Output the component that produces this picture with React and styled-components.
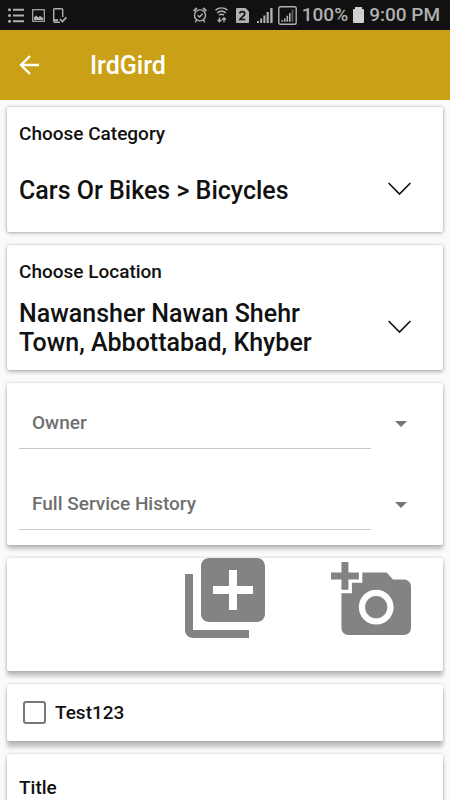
import React from 'react'
import styled, { createGlobalStyle, css } from 'styled-components'

const GlobalStyle = createGlobalStyle`
    * {
        box-sizing: border-box;
    }
    html {
        scrollbar-width: none;
    }
    body {
        margin: 0;
        background: #fafafa;
        color: #111;
        font-family: Roboto, "Liberation Sans", sans-serif;
        font-weight: 500;
    }
`

const StatusBarStyle = styled.div`
    display: flex;
    justify-content: space-between;
    align-items: center;
    height: 30px;
    padding: 0 10px 0 8px;
    background: #111;
    color: #b0b0b0;
    font-size: 19px;
    line-height: 30px;
    white-space: nowrap;
`
const StatusGroupStyle = styled.div`
    display: flex;
    align-items: center;
    gap: ${props => props.$gap}px;
`
const ToolbarStyle = styled.header`
    display: flex;
    align-items: center;
    height: 70px;
    padding: 0 18px;
    gap: 48px;
    background: #c9a016;
    color: #fff;
`
const BackButtonStyle = styled.button`
    display: flex;
    padding: 0;
    border: 0;
    background: none;
    color: inherit;
`
const TitleStyle = styled.h1`
    margin: 0;
    padding-top: 2px;
    font-size: 25px;
    line-height: 30px;
    font-weight: 500;
`

const FormStyle = styled.form`
    display: flex;
    flex-direction: column;
    gap: 13px;
    padding: 7px;
`
const CardStyle = styled.section`
    display: flex;
    flex-direction: column;
    border-radius: 2px;
    background: #fff;
    box-shadow: 0 0 3px rgba(0, 0, 0, 0.2), 0 ${props => props.$depth}px 4px rgba(0, 0, 0, 0.24);
    ${props => props.$padded && css`
        padding: 14px 12px 13px;
    `}
    ${props => props.$roomy && css`
        padding: 21px 12px 13px;
    `}
`
const LabelStyle = styled.label`
    font-size: 19px;
    line-height: 26px;
    color: #111;
`
const PickerStyle = styled.button`
    display: flex;
    align-items: center;
    justify-content: space-between;
    min-height: 58px;
    margin: 14px 0 0;
    padding: 0 20px 0 0;
    border: 0;
    background: none;
    color: #111;
    font: inherit;
    font-size: 25px;
    line-height: 29px;
    text-align: left;
`
const PickerTextStyle = styled.span`
    max-width: 320px;
`

const SpinnersStyle = styled.div`
    display: flex;
    flex-direction: column;
    gap: 31px;
    padding: 16px 36px 15px 12px;
`
const SpinnerStyle = styled.label`
    display: flex;
    align-items: center;
    gap: 24px;
    color: #757575;
`
const SelectStyle = styled.select`
    flex: 1;
    min-width: 0;
    height: 50px;
    padding: 0 13px 2px;
    border: 0;
    border-bottom: 1px solid #c8c8c8;
    border-radius: 0;
    appearance: none;
    background: none;
    color: #6f6f6f;
    font: inherit;
    font-size: 19px;
`

const MediaRowStyle = styled.div`
    display: flex;
    justify-content: flex-end;
    align-items: flex-start;
    gap: 66px;
    height: 113px;
    padding-right: 32px;
`
const MediaButtonStyle = styled.button`
    display: flex;
    align-items: center;
    height: 80px;
    padding: 0;
    border: 0;
    background: none;
    color: #838383;
`

const CheckRowStyle = styled.div`
    display: flex;
    align-items: center;
    gap: 9px;
    height: 57px;
    padding: 0 16px;
`
const CheckboxStyle = styled.input`
    appearance: none;
    width: 23px;
    height: 23px;
    margin: 0;
    border: 2px solid #777;
    border-radius: 3px;
    &:checked {
        background: #c9a016;
    }
`
const TextFieldStyle = styled.input`
    height: 44px;
    margin-top: 8px;
    border: 0;
    border-bottom: 1px solid #c8c8c8;
    background: none;
    font: inherit;
    font-size: 19px;
`

const ListIcon = () => (
    <svg width="16" height="15" viewBox="0 0 16 15" fill="currentColor">
        <circle cx="1.5" cy="1.8" r="1.5" />
        <circle cx="1.5" cy="7.5" r="1.5" />
        <circle cx="1.5" cy="13.2" r="1.5" />
        <path d="M5 .8h11v2H5zM5 6.5h11v2H5zM5 12.2h11v2H5z" />
    </svg>
)

const ImageIcon = () => (
    <svg width="13" height="13" viewBox="0 0 13 13">
        <rect x=".7" y=".7" width="11.6" height="11.6" fill="none" stroke="currentColor" strokeWidth="1.2" />
        <path d="M2 11V8.2l2.2-1.6 2 1.8L8 7l3 1.8V11z" fill="currentColor" />
    </svg>
)

const PhoneCheckIcon = () => (
    <svg width="14" height="15" viewBox="0 0 14 15" fill="none" stroke="currentColor">
        <path d="M9.7 9V1.7a1 1 0 0 0-1-1h-7a1 1 0 0 0-1 1v11.6a1 1 0 0 0 1 1H7" strokeWidth="1.4" />
        <path d="M1 12.2h4" strokeWidth="2" />
        <path d="M7 11l2.4 2.6L13.4 9.4" strokeWidth="1.6" />
    </svg>
)

const AlarmIcon = () => (
    <svg width="14" height="16" viewBox="0 0 14 16" fill="none" stroke="currentColor">
        <circle cx="7" cy="8.4" r="5.5" strokeWidth="1.4" />
        <path d="M.6 4L4 1M13.4 4L10 1" strokeWidth="1.7" />
        <path d="M4.6 8.2l2 1.8 3-3.2M3.5 13l-1.2 2.4M10.5 13l1.2 2.4" strokeWidth="1.4" />
    </svg>
)

const WifiIcon = () => (
    <svg width="13" height="16" viewBox="0 0 13 16" fill="none" stroke="currentColor">
        <path d="M.5 3.2c3.6-3 8.4-3 12 0M2.2 5.8c2.6-2.1 6-2.1 8.6 0M4 8.2c1.5-1.2 3.5-1.2 5 0" strokeWidth="1.5" />
        <path d="M4.5 10.4v4M2.6 12.8l1.9 2 1.9-2M9 15.2v-4M7.1 12.8l1.9-2 1.9 2" strokeWidth="1.3" />
    </svg>
)

const SimIcon = () => (
    <svg width="13" height="15" viewBox="0 0 13 15">
        <path d="M1 0h8.5L13 3.5V14a1 1 0 0 1-1 1H1a1 1 0 0 1-1-1V1a1 1 0 0 1 1-1z" fill="currentColor" />
        <path d="M3.8 5.5c.2-2.4 5-2.6 5 .2 0 2-3.4 3.3-4.8 5.8h5.2" fill="none" stroke="#111" strokeWidth="1.7" />
    </svg>
)

const SignalIcon = () => (
    <svg width="16" height="16" viewBox="0 0 16 16" fill="currentColor">
        <path d="M0 14h2v2H0zM3.2 11.5h2V16h-2zM6.4 8.5h2V16h-2z" />
        <path d="M9.6 5h2.2v11H9.6zM13.2 1h2.4v15h-2.4z" />
    </svg>
)

const BoxedSignalIcon = () => (
    <svg width="19" height="19" viewBox="0 0 19 19" fill="currentColor">
        <rect x=".8" y=".8" width="17.4" height="17.4" rx="1.5" fill="none" stroke="currentColor" strokeWidth="1.4" />
        <path d="M3.5 14h1.6v1.8H3.5zM6 12.4h1.6v3.4H6zM8.5 9.8h1.6v6H8.5z" />
        <path d="M11 7h1.6v8.8H11z" />
        <path d="M13.6 3.6h1.7v12.2h-1.7z" opacity=".5" />
    </svg>
)

const BatteryIcon = () => (
    <svg width="11" height="16" viewBox="0 0 11 16" fill="#cfcfcf">
        <path d="M2 0h7v2h1a1 1 0 0 1 1 1v12a1 1 0 0 1-1 1H1a1 1 0 0 1-1-1V3a1 1 0 0 1 1-1h1z" />
    </svg>
)

const BackIcon = () => (
    <svg width="24" height="24" viewBox="0 0 24 24" fill="none" stroke="currentColor" strokeWidth="2.4">
        <path d="M21 12H3.5M12 3L3 12l9 9" />
    </svg>
)

const ChevronIcon = () => (
    <svg width="23" height="16" viewBox="0 0 23 16" fill="none" stroke="#111" strokeWidth="1.6">
        <path d="M.6 1L11.5 12 22.4 1" />
    </svg>
)

const ArrowIcon = () => (
    <svg width="12" height="6" viewBox="0 0 12 6" fill="currentColor">
        <path d="M0 0h12L6 6z" />
    </svg>
)

const AddToPhotosIcon = () => (
    <svg width="80" height="80" viewBox="2 2 20 20" fill="currentColor">
        <path d="M4 6H2v14c0 1.1.9 2 2 2h14v-2H4V6zm16-4H8c-1.1 0-2 .9-2 2v12c0 1.1.9 2 2 2h12c1.1 0 2-.9 2-2V4c0-1.1-.9-2-2-2zm-1 9h-4v4h-2v-4H9V9h4V5h2v4h4v2z" />
    </svg>
)

const AddPhotoIcon = () => (
    <svg width="80" height="73" viewBox="0 1 23 21" fill="currentColor">
        <path d="M3 4V1h2v3h3v2H5v3H3V6H0V4h3zm3 6V7h3V4h7l1.83 2H21c1.1 0 2 .9 2 2v12c0 1.1-.9 2-2 2H5c-1.1 0-2-.9-2-2V10h3zm7 9c2.76 0 5-2.24 5-5s-2.24-5-5-5-5 2.24-5 5 2.24 5 5 5zm-3.2-5c0 1.77 1.43 3.2 3.2 3.2s3.2-1.43 3.2-3.2-1.43-3.2-3.2-3.2-3.2 1.43-3.2 3.2z" />
    </svg>
)

const StatusBar = () => (
    <StatusBarStyle>
        <StatusGroupStyle $gap={8}>
            <ListIcon />
            <ImageIcon />
            <PhoneCheckIcon />
        </StatusGroupStyle>
        <StatusGroupStyle $gap={5}>
            <StatusGroupStyle $gap={8}>
                <AlarmIcon />
                <WifiIcon />
                <SimIcon />
                <SignalIcon />
            </StatusGroupStyle>
            <BoxedSignalIcon />
            <span>100%</span>
            <BatteryIcon />
            <span>9:00 PM</span>
        </StatusGroupStyle>
    </StatusBarStyle>
)

const Picker = ({ id, label, value, depth }) => (
    <CardStyle $depth={depth} $padded>
        <LabelStyle htmlFor={id}>{label}</LabelStyle>
        <PickerStyle id={id} type="button">
            <PickerTextStyle>{value}</PickerTextStyle>
            <ChevronIcon />
        </PickerStyle>
    </CardStyle>
)

const Spinner = ({ name }) => (
    <SpinnerStyle>
        <SelectStyle aria-label={name} defaultValue={name}>
            <option>{name}</option>
        </SelectStyle>
        <ArrowIcon />
    </SpinnerStyle>
)

const App = () => (
    <>
        <GlobalStyle />
        <StatusBar />
        <ToolbarStyle>
            <BackButtonStyle type="button" aria-label="Back">
                <BackIcon />
            </BackButtonStyle>
            <TitleStyle>IrdGird</TitleStyle>
        </ToolbarStyle>
        <FormStyle>
            <Picker id="category" label="Choose Category" value="Cars Or Bikes > Bicycles" depth={1} />
            <Picker
                id="location"
                label="Choose Location"
                value="Nawansher Nawan Shehr Town, Abbottabad, Khyber"
                depth={2}
            />
            <CardStyle $depth={4}>
                <SpinnersStyle>
                    <Spinner name="Owner" />
                    <Spinner name="Full Service History" />
                </SpinnersStyle>
            </CardStyle>
            <CardStyle $depth={5}>
                <MediaRowStyle>
                    <MediaButtonStyle type="button" aria-label="Add from gallery">
                        <AddToPhotosIcon />
                    </MediaButtonStyle>
                    <MediaButtonStyle type="button" aria-label="Take a photo">
                        <AddPhotoIcon />
                    </MediaButtonStyle>
                </MediaRowStyle>
            </CardStyle>
            <CardStyle $depth={6}>
                <CheckRowStyle>
                    <CheckboxStyle id="test" type="checkbox" />
                    <LabelStyle htmlFor="test">Test123</LabelStyle>
                </CheckRowStyle>
            </CardStyle>
            <CardStyle $depth={6} $roomy>
                <LabelStyle htmlFor="title">Title</LabelStyle>
                <TextFieldStyle id="title" type="text" />
            </CardStyle>
        </FormStyle>
    </>
)

export default App
